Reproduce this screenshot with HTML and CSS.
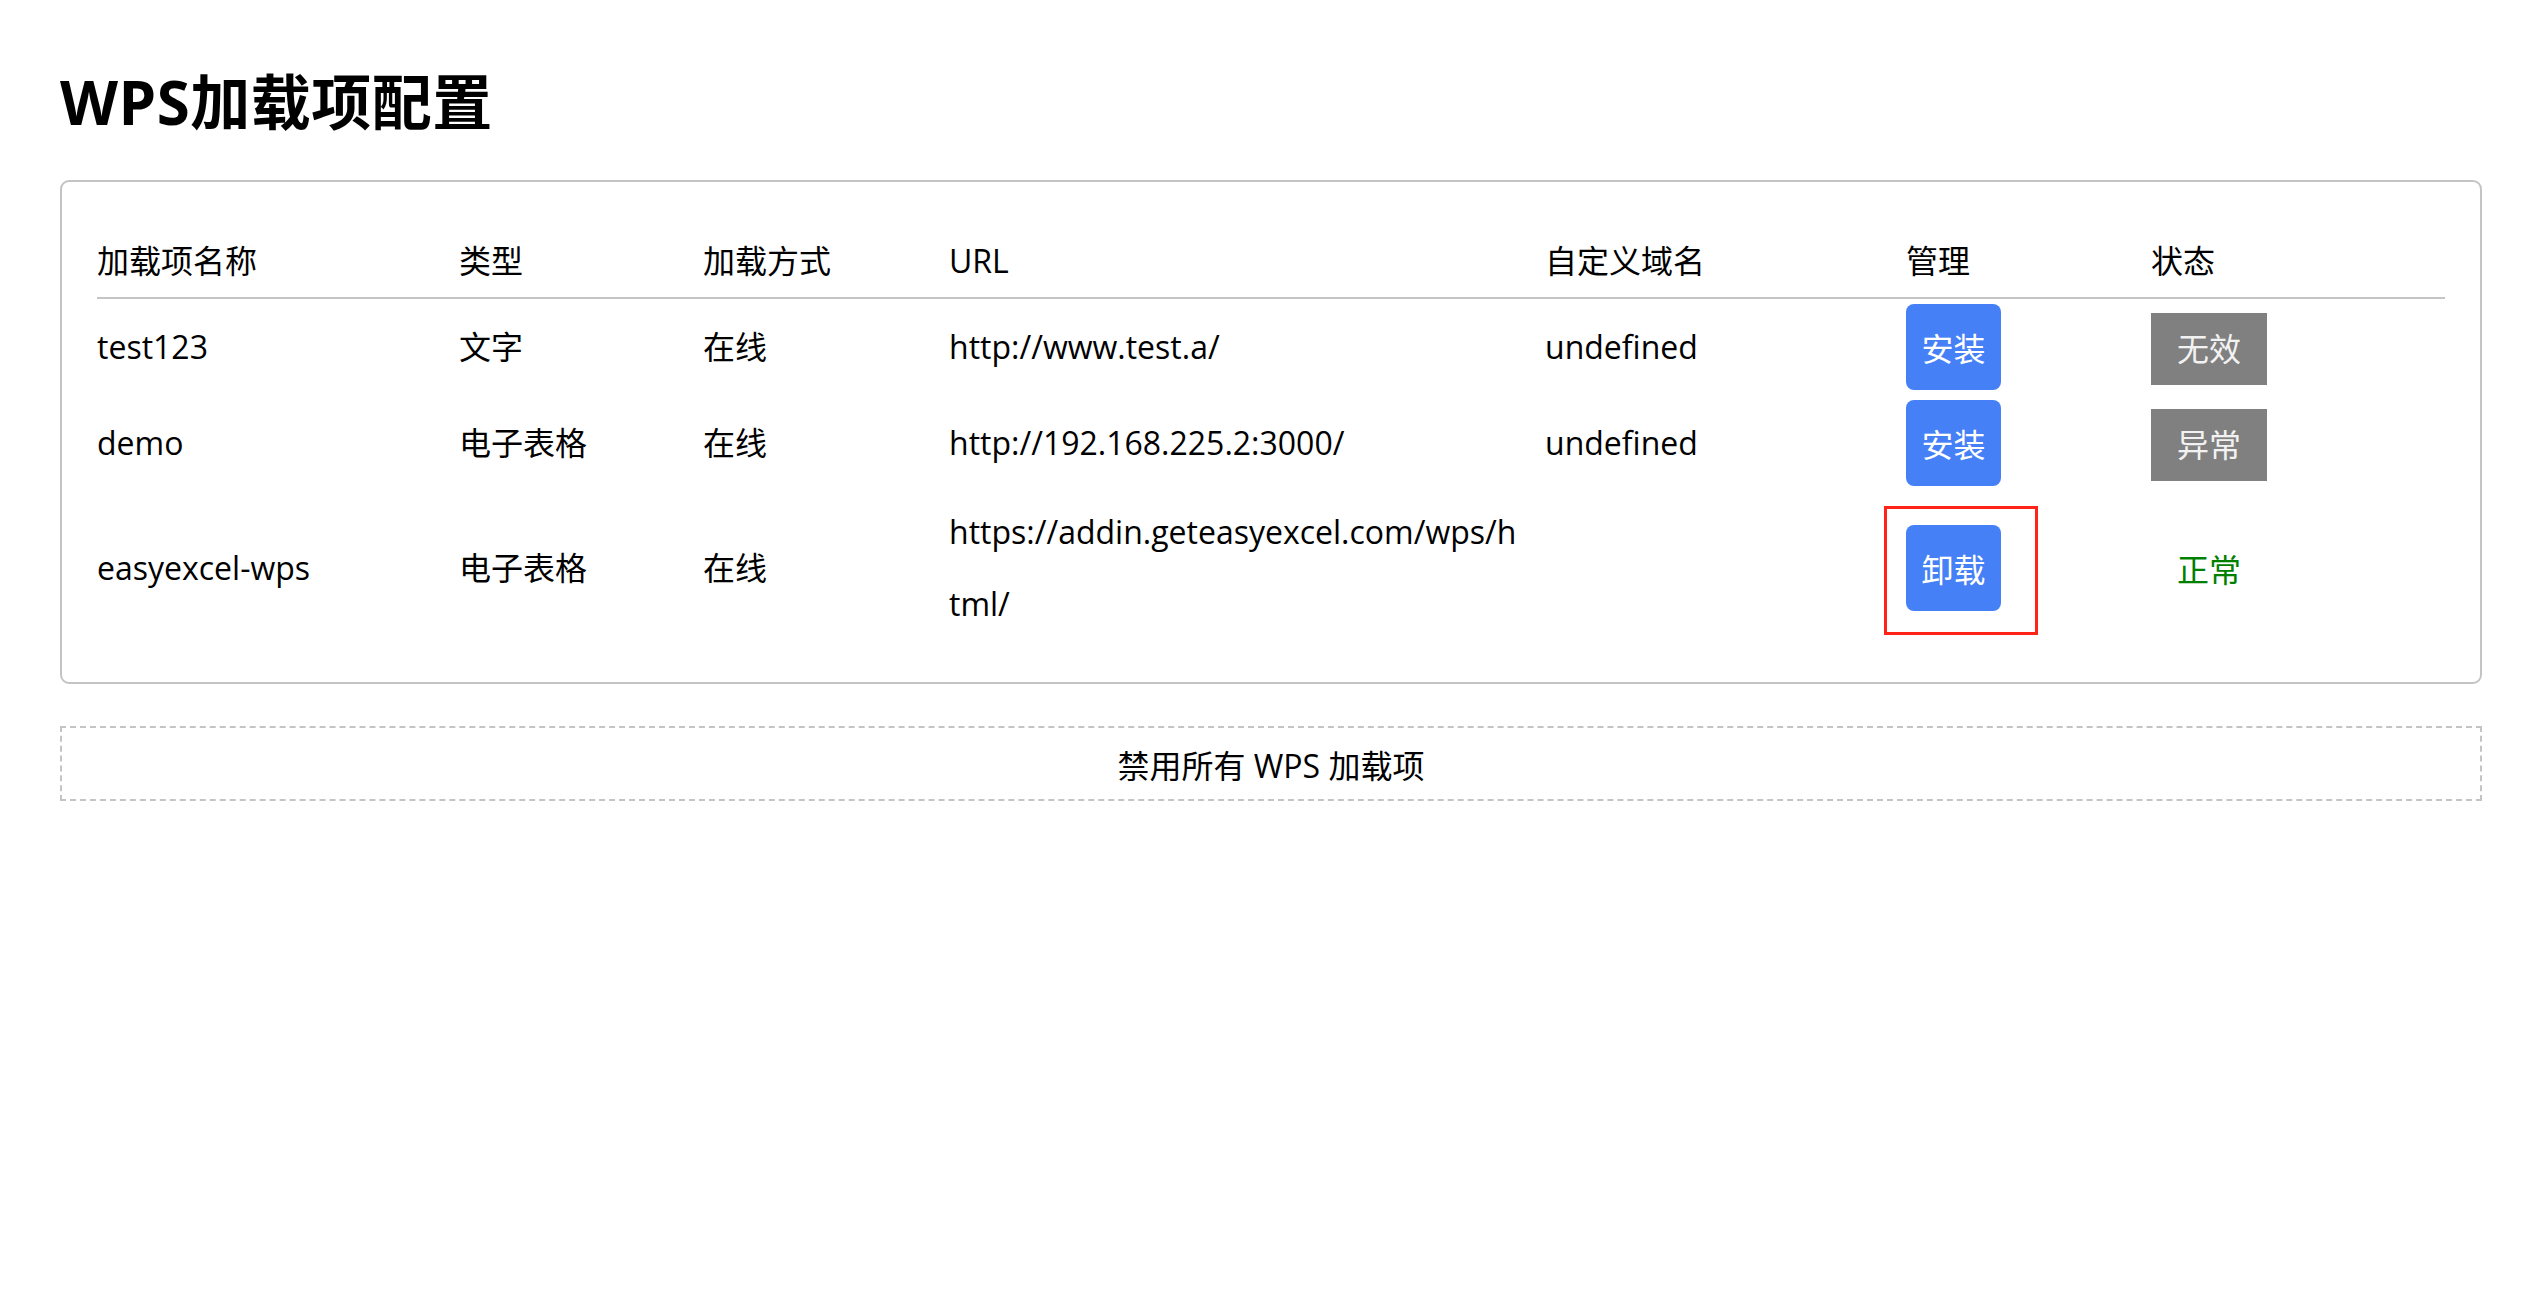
FILE: index.html
```html
<!DOCTYPE html>
<html lang="zh-CN">
<head>
    <meta charset="UTF-8">
    <title>WPS加载项配置</title>
    <link rel="stylesheet" href="styles.css">
</head>
<body>
<div class="page">
    <h1>WPS加载项配置</h1>
    <div class="addin-card">
        <table class="addin-table">
            <colgroup>
                <col class="col-name">
                <col class="col-type">
                <col class="col-mode">
                <col class="col-url">
                <col class="col-domain">
                <col class="col-manage">
                <col class="col-state">
            </colgroup>
            <thead>
                <tr>
                    <th>加载项名称</th>
                    <th>类型</th>
                    <th>加载方式</th>
                    <th>URL</th>
                    <th>自定义域名</th>
                    <th>管理</th>
                    <th>状态</th>
                </tr>
            </thead>
            <tbody>
                <tr>
                    <td>test123</td>
                    <td>文字</td>
                    <td>在线</td>
                    <td class="url">http://www.test.a/</td>
                    <td>undefined</td>
                    <td><button class="btn">安装</button></td>
                    <td><span class="state state-bad">无效</span></td>
                </tr>
                <tr>
                    <td>demo</td>
                    <td>电子表格</td>
                    <td>在线</td>
                    <td class="url">http://192.168.225.2:3000/</td>
                    <td>undefined</td>
                    <td><button class="btn">安装</button></td>
                    <td><span class="state state-bad">异常</span></td>
                </tr>
                <tr>
                    <td>easyexcel-wps</td>
                    <td>电子表格</td>
                    <td>在线</td>
                    <td class="url">https://addin.geteasyexcel.com/wps/html/</td>
                    <td></td>
                    <td><span class="marked"><button class="btn">卸载</button></span></td>
                    <td><span class="state state-ok">正常</span></td>
                </tr>
            </tbody>
        </table>
    </div>
    <button class="disable-all">禁用所有 WPS 加载项</button>
</div>
</body>
</html>
```

FILE: styles.css
```css
body { margin: 0; background: #fff; color: #000; font-family: "Open Sans", "Noto Sans CJK SC", sans-serif; }
.page { padding: 0 62px 0 60px; }
h1 { margin: 62px 0 38px 0; font-size: 60px; line-height: 80px; font-weight: bold; letter-spacing: 0.5px; }

.addin-card { border: 2px solid #c4c4c4; border-radius: 9px; padding: 38px 35px 37px 35px; }
.addin-table { width: 100%; table-layout: fixed; border-collapse: collapse; font-size: 32px; }
.col-name { width: 362px; }
.col-type { width: 244px; }
.col-mode { width: 246px; }
.col-url { width: 596px; }
.col-domain { width: 361px; }
.col-manage { width: 245px; }
.col-state { width: 294px; }
.addin-table th { text-align: left; font-weight: normal; line-height: 72px; padding: 5px 10px 0 0; border-bottom: 2px solid #c4c4c4; }
.addin-table td { line-height: 72px; padding: 5px 10px 5px 0; vertical-align: middle; }
.addin-table td.url { word-break: break-all; padding-right: 24px; }

.btn { display: inline-flex; align-items: center; justify-content: center; width: 95px; height: 86px; padding: 0; border: none; border-radius: 8px; background: #4680f6; color: #fff; font-family: inherit; font-size: 32px; vertical-align: middle; cursor: pointer; }
.marked { position: relative; display: inline-block; vertical-align: middle; line-height: 0; }
.marked::after { content: ""; position: absolute; left: -22px; top: -19px; right: -37px; bottom: -24px; border: 3px solid #ff2318; }

.state { display: inline-flex; align-items: center; justify-content: center; width: 116px; height: 72px; vertical-align: middle; }
.state-bad { background: #808080; color: #f2f2f2; }
.state-ok { color: #008000; }

.disable-all { display: block; width: 100%; height: 75px; margin-top: 42px; border: 2px dashed #c4c4c4; background: #fff; color: #000; font-family: inherit; font-size: 32px; cursor: pointer; }
```
